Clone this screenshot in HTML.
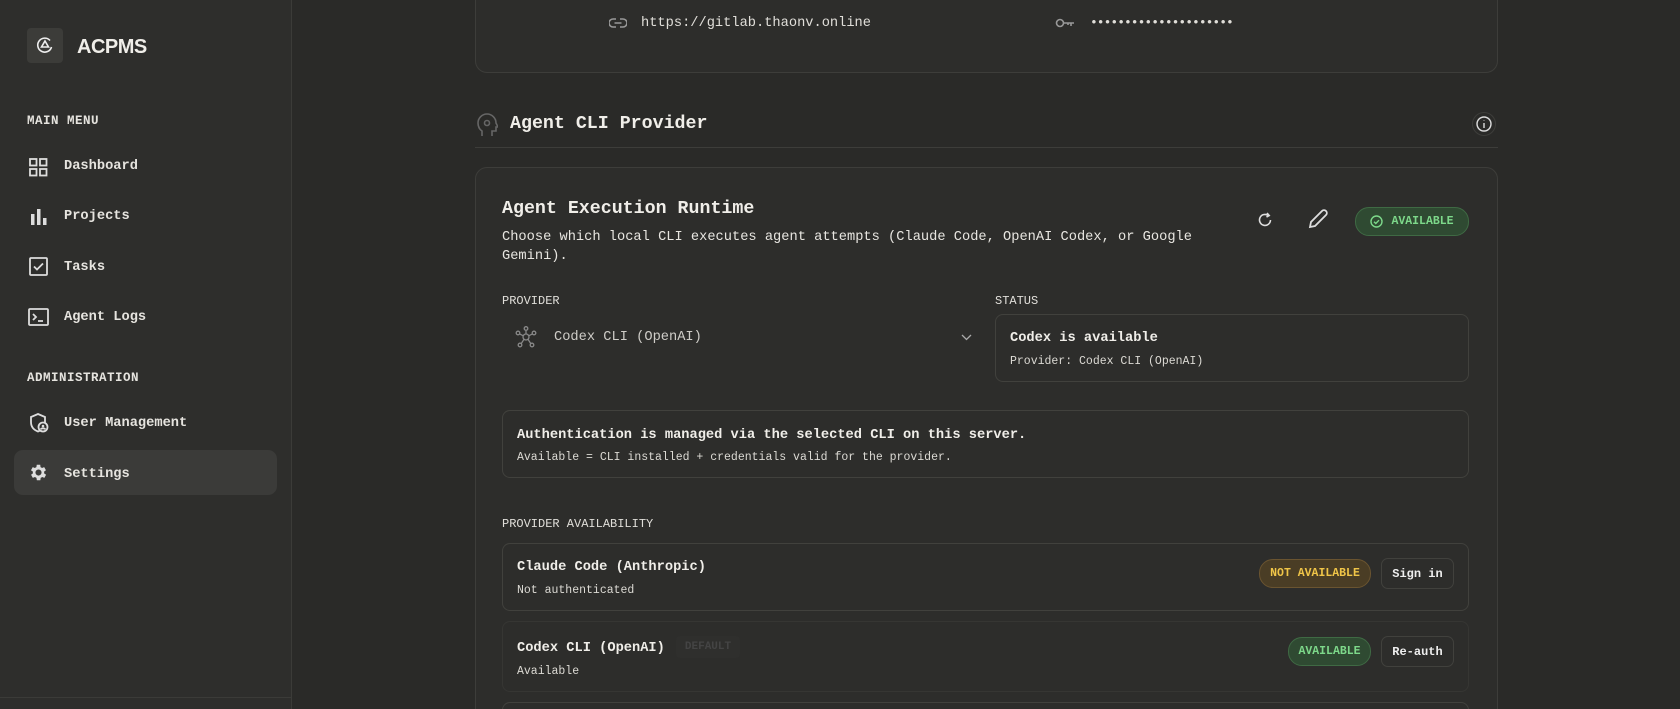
<!DOCTYPE html>
<html><head><meta charset="utf-8"><style>
*{box-sizing:border-box;margin:0;padding:0}
html{width:1680px;height:709px;overflow:hidden}
body{width:1680px;height:709px;overflow:hidden;background:#2a2a28;font-family:"Liberation Mono",monospace;color:#e8e6e1;position:relative}
.a{position:absolute;white-space:nowrap}
div.a:not(.box):not(.card):not(.badge):not(.btn):not(.sb):not(.bg){margin-top:2px}
.sb{left:0;top:0;width:292px;height:709px;background:#2e2e2c;border-right:1px solid #3b3b38}
.nav{font-size:13.7px;font-weight:bold;color:#e6e4df}
.lbl{font-size:12.5px;font-weight:bold;letter-spacing:.5px;color:#e6e4df}
.card{border:1px solid #3d3d3a;border-radius:12px;background:#2d2d2b}
.box{border:1px solid #41413d;border-radius:8px}
.small{font-size:11.5px;color:#dcdad4}
.badge{border-radius:14px;font-size:11.5px;font-weight:bold;display:flex;align-items:center;justify-content:center}
.btn{border:1px solid #41413d;border-radius:7px;font-size:12px;font-weight:bold;display:flex;align-items:center;justify-content:center;color:#eee}
</style></head><body>
<div class="a sb"></div>
<div class="a bg" style="left:27px;top:28px;width:36px;height:35px;background:#3c3c39;border-radius:4px"></div>
<svg class="a" style="left:36px;top:36px" width="18" height="18" viewBox="0 0 18 18" fill="none" stroke="#eee" stroke-width="1.6"><path d="M14 4.5A7 7 0 1 0 15.5 11"/><path d="M9 5l3.5 6h-7z"/></svg>
<div class="a" style="left:77px;top:34px;font-family:'Liberation Sans';font-weight:bold;font-size:20px;letter-spacing:-.5px;color:#f0eee9">ACPMS</div>
<div class="a lbl" style="left:27px;top:112px">MAIN MENU</div>
<svg class="a" style="left:29px;top:158px" width="19" height="19" fill="none" stroke="#ddd" stroke-width="1.8"><rect x="1" y="1" width="6.5" height="6.5"/><rect x="11" y="1" width="6.5" height="6.5"/><rect x="1" y="11" width="6.5" height="6.5"/><rect x="11" y="11" width="6.5" height="6.5"/></svg>
<div class="a nav" style="left:64px;top:157px">Dashboard</div>
<svg class="a" style="left:30px;top:208px" width="18" height="18" fill="#ddd"><rect x="1" y="6" width="3.5" height="11"/><rect x="7" y="1" width="3.5" height="16"/><rect x="13" y="10" width="3.5" height="7"/></svg>
<div class="a nav" style="left:64px;top:207px">Projects</div>
<svg class="a" style="left:29px;top:257px" width="19" height="19" fill="none" stroke="#ddd" stroke-width="1.8"><rect x="1" y="1" width="17" height="17" rx="1"/><path d="M5 9.5l3 3 6-6"/></svg>
<div class="a nav" style="left:64px;top:258px">Tasks</div>
<svg class="a" style="left:28px;top:308px" width="21" height="18" fill="none" stroke="#ddd" stroke-width="1.8"><rect x="1" y="1" width="19" height="16" rx="1"/><path d="M5 6l3 3-3 3M10 13h5"/></svg>
<div class="a nav" style="left:64px;top:308px">Agent Logs</div>
<div class="a lbl" style="left:27px;top:369px">ADMINISTRATION</div>
<svg class="a" style="left:29px;top:413px" width="20" height="20" fill="none" stroke="#ddd" stroke-width="1.8"><path d="M9 1l7 3v5c0 5-3 8-7 9.5C5 17 2 14 2 9V4z"/><circle cx="14" cy="14" r="4.5" fill="#2e2e2c"/><circle cx="14" cy="13" r="1.3" fill="#ddd" stroke="none"/><path d="M11.8 16.3c.8-1.3 3.6-1.3 4.4 0"/></svg>
<div class="a nav" style="left:64px;top:414px">User Management</div>
<div class="a bg" style="left:14px;top:450px;width:263px;height:45px;background:#3b3b39;border-radius:9px"></div>
<svg class="a" style="left:28px;top:462px" width="21" height="21" viewBox="0 0 24 24" fill="#ddd"><path d="M19.4 13a7.5 7.5 0 0 0 0-2l2.1-1.6-2-3.5-2.5 1a7 7 0 0 0-1.7-1L15 3.2h-4l-.4 2.7a7 7 0 0 0-1.7 1l-2.5-1-2 3.5L6.6 11a7.5 7.5 0 0 0 0 2l-2.1 1.6 2 3.5 2.5-1a7 7 0 0 0 1.7 1l.4 2.7h4l.4-2.7a7 7 0 0 0 1.7-1l2.5 1 2-3.5zM13 15.5a3.5 3.5 0 1 1 0-7 3.5 3.5 0 0 1 0 7z" transform="translate(-1 0)"/></svg>
<div class="a nav" style="left:64px;top:465px">Settings</div>
<div class="a bg" style="left:0;top:697px;width:292px;border-top:1px solid #3b3b38"></div>

<div class="a card" style="left:475px;top:-20px;width:1023px;height:93px"></div>
<svg class="a" style="left:609px;top:17px" width="18" height="12" fill="none" stroke="#999" stroke-width="1.6"><path d="M7 2H4a4 4 0 0 0 0 8h3M11 2h3a4 4 0 0 1 0 8h-3M5.5 6h7"/></svg>
<div class="a" style="left:641px;top:14px;font-size:13.7px;color:#e0ded9">https://gitlab.thaonv.online</div>
<svg class="a" style="left:1055px;top:16px" width="20" height="14" fill="none" stroke="#999" stroke-width="1.6"><circle cx="5" cy="7" r="3.5"/><path d="M8.5 7H19M16 7v3M13 7v2"/></svg>
<div class="a" style="left:1090px;top:13px;font-size:13px;color:#e0ded9;letter-spacing:-1px">•••••••••••••••••••••</div>

<svg class="a" style="left:476px;top:113px" width="22" height="24" fill="none" stroke="#666" stroke-width="1.6"><path d="M6 23v-5C3 16 2 13 2 10a9 9 0 0 1 18 0l2 4h-2v4h-4v5"/><circle cx="11" cy="10" r="2.5"/></svg>
<div class="a" style="left:510px;top:112px;font-size:18.3px;font-weight:bold;color:#f0eee9">Agent CLI Provider</div>
<div class="a bg" style="left:1472px;top:112px;width:24px;height:24px;border:1px solid #3d3d3a;border-radius:50%"></div>
<svg class="a" style="left:1475px;top:115px" width="18" height="18" fill="none" stroke="#ddd" stroke-width="1.4"><circle cx="9" cy="9" r="7"/><path d="M9 8v5M9 5.5v.5"/></svg>
<div class="a bg" style="left:475px;top:147px;width:1023px;border-top:1px solid #3d3d3a"></div>

<div class="a card" style="left:475px;top:167px;width:1023px;height:560px"></div>
<div class="a" style="left:502px;top:197px;font-size:18.3px;font-weight:bold;color:#f0eee9">Agent Execution Runtime</div>
<div class="a" style="left:502px;top:227px;font-size:13.7px;line-height:18.5px;color:#e8e6e1;white-space:normal;width:700px">Choose which local CLI executes agent attempts (Claude Code, OpenAI Codex, or Google Gemini).</div>
<svg class="a" style="left:1258px;top:212px" width="15" height="16" fill="none" stroke="#ddd" stroke-width="1.6"><path d="M12.5 8A5.5 5.5 0 1 1 10 3.3M9 1l2.2 2.5L8.5 5"/></svg>
<svg class="a" style="left:1306px;top:207px" width="24" height="24" fill="none" stroke="#ddd" stroke-width="1.8"><path d="M4 20l1-5L16 4a2.3 2.3 0 0 1 4 4L9 19z"/></svg>
<div class="a badge" style="left:1355px;top:207px;width:114px;height:29px;background:#2f4a32;border:1px solid #3f6a44;color:#7dd88a"><svg width="13" height="13" fill="none" stroke="#7dd88a" stroke-width="1.4" style="margin-right:8px"><circle cx="6.5" cy="6.5" r="5.5"/><path d="M4 6.7l1.8 1.8 3.2-3.3"/></svg>AVAILABLE</div>

<div class="a" style="left:502px;top:292px;font-size:12px;color:#e0ded9">PROVIDER</div>
<div class="a" style="left:995px;top:292px;font-size:12px;color:#e0ded9">STATUS</div>
<svg class="a" style="left:515px;top:326px" width="22" height="22" fill="none" stroke="#888" stroke-width="1.3"><circle cx="11" cy="11" r="3"/><circle cx="11" cy="2.5" r="1.8"/><circle cx="3" cy="7" r="1.8"/><circle cx="19" cy="7" r="1.8"/><circle cx="5" cy="19" r="1.8"/><circle cx="17" cy="19" r="1.8"/><path d="M11 4.3V8M4.6 7.9L8.3 9.8M17.4 7.9l-3.7 1.9M6.2 17.6l2.8-4.3M15.8 17.6l-2.8-4.3"/></svg>
<div class="a" style="left:554px;top:328px;font-size:13.7px;color:#cfcdc8">Codex CLI (OpenAI)</div>
<svg class="a" style="left:961px;top:334px" width="11" height="7" fill="none" stroke="#aaa" stroke-width="1.3"><path d="M1 1l4.5 4.5L10 1"/></svg>
<div class="a box" style="left:995px;top:314px;width:474px;height:68px"></div>
<div class="a" style="left:1010px;top:329px;font-size:13.7px;font-weight:bold;color:#f0eee9">Codex is available</div>
<div class="a small" style="left:1010px;top:353px">Provider: Codex CLI (OpenAI)</div>

<div class="a box" style="left:502px;top:410px;width:967px;height:68px"></div>
<div class="a" style="left:517px;top:426px;font-size:13.7px;font-weight:bold;color:#f0eee9">Authentication is managed via the selected CLI on this server.</div>
<div class="a small" style="left:517px;top:449px">Available = CLI installed + credentials valid for the provider.</div>

<div class="a" style="left:502px;top:515px;font-size:12px;color:#e0ded9">PROVIDER AVAILABILITY</div>
<div class="a box" style="left:502px;top:543px;width:967px;height:68px"></div>
<div class="a" style="left:517px;top:558px;font-size:13.7px;font-weight:bold;color:#f0eee9">Claude Code (Anthropic)</div>
<div class="a small" style="left:517px;top:582px">Not authenticated</div>
<div class="a badge" style="left:1259px;top:559px;width:112px;height:29px;background:#4a3d25;border:1px solid #6a5430;color:#f0c548">NOT AVAILABLE</div>
<div class="a btn" style="left:1381px;top:558px;width:73px;height:31px">Sign in</div>

<div class="a box" style="left:502px;top:621px;width:967px;height:71px;border-color:#363633"></div>
<div class="a" style="left:517px;top:639px;font-size:13.7px;font-weight:bold;color:#f0eee9">Codex CLI (OpenAI)</div>
<div class="a badge" style="left:676px;top:636px;width:64px;height:22px;background:#2f2f2d;border-radius:4px;font-size:11px;font-weight:bold;color:#444">DEFAULT</div>
<div class="a small" style="left:517px;top:663px">Available</div>
<div class="a badge" style="left:1288px;top:637px;width:83px;height:29px;background:#2f4a32;border:1px solid #3f6a44;color:#7dd88a">AVAILABLE</div>
<div class="a btn" style="left:1381px;top:636px;width:73px;height:31px">Re-auth</div>
<div class="a box" style="left:502px;top:702px;width:967px;height:30px"></div>
</body></html>
